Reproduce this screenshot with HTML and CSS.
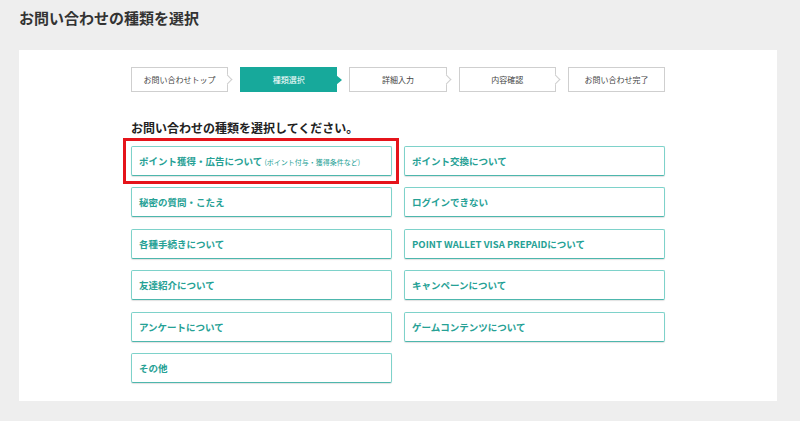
FILE: index.html
```html
<!DOCTYPE html>
<html lang="ja">
<head>
<meta charset="utf-8">
<link rel="stylesheet" href="styles.css">
</head>
<body>
<h1 class="page-title">お問い合わせの種類を選択</h1>
<div class="card">
  <div class="inner">
    <ol class="steps">
      <li class="step">お問い合わせトップ</li>
      <li class="step current">種類選択</li>
      <li class="step">詳細入力</li>
      <li class="step">内容確認</li>
      <li class="step last">お問い合わせ完了</li>
    </ol>
    <h2 class="lead">お問い合わせの種類を選択してください。</h2>
    <div class="grid">
      <div class="highlight"><a class="opt">ポイント獲得・広告について <span class="sub">(ポイント付与・獲得条件など)</span></a></div>
      <a class="opt">ポイント交換について</a>
      <a class="opt">秘密の質問・こたえ</a>
      <a class="opt">ログインできない</a>
      <a class="opt">各種手続きについて</a>
      <a class="opt">POINT WALLET VISA PREPAIDについて</a>
      <a class="opt">友達紹介について</a>
      <a class="opt">キャンペーンについて</a>
      <a class="opt">アンケートについて</a>
      <a class="opt">ゲームコンテンツについて</a>
      <a class="opt">その他</a>
    </div>
  </div>
</div>
</body>
</html>
```

FILE: styles.css
```css
* { box-sizing: border-box; }
html, body { margin: 0; padding: 0; }
body {
  background: #eeeeee;
  font-family: "Noto Sans CJK JP", "Noto Sans", sans-serif;
  color: #333;
  padding: 0 23px 0 19px;
}
.page-title {
  margin: 0;
  padding-top: 8px;
  height: 50px;
  font-size: 15px;
  font-weight: bold;
  line-height: 20px;
  color: #333;
}
.card {
  background: #fff;
  height: 351px;
  padding-top: 17px;
}
.inner {
  width: 534px;
  margin: 0 auto;
}
.steps {
  list-style: none;
  margin: 0;
  padding: 0;
  display: flex;
  gap: 12px;
}
.step {
  position: relative;
  flex: 1;
  height: 25px;
  border: 1px solid #cfcfcf;
  background: #fff;
  font-size: 8px;
  line-height: 23px;
  text-align: center;
  color: #444;
}
.step::after {
  content: "";
  position: absolute;
  right: -4px;
  top: 8px;
  width: 6px;
  height: 6px;
  background: #fff;
  border-top: 1px solid #cfcfcf;
  border-right: 1px solid #cfcfcf;
  transform: rotate(45deg);
}
.step.last::after { display: none; }
.step.current {
  background: #17a99b;
  border-color: #17a99b;
  color: #fff;
}
.step.current::after {
  right: -6px;
  top: 7px;
  width: 0;
  height: 0;
  background: none;
  border: none;
  border-top: 5px solid transparent;
  border-bottom: 5px solid transparent;
  border-left: 6px solid #17a99b;
  transform: none;
}
.lead {
  margin: 28px 0 0;
  font-size: 12px;
  font-weight: bold;
  line-height: 16px;
  color: #222;
}
.grid {
  margin-top: 10px;
  display: grid;
  grid-template-columns: 1fr 1fr;
  column-gap: 12px;
  row-gap: 11.4px;
}
.highlight {
  position: relative;
}
.highlight::before {
  content: "";
  position: absolute;
  left: -8px;
  top: -8px;
  right: -7px;
  bottom: -8px;
  border: 3px solid #e5141b;
  pointer-events: none;
}
.opt {
  display: block;
  height: 30px;
  border: 1px solid #7ed2ca;
  border-bottom-color: #4db7ad;
  border-radius: 2px;
  box-shadow: 0 1px 1px rgba(0,0,0,0.12);
  padding-left: 7px;
  font-size: 9.5px;
  font-weight: bold;
  line-height: 28px;
  color: #26a195;
  white-space: nowrap;
  overflow: hidden;
}
.sub {
  font-size: 7px;
  font-weight: normal;
}
```
